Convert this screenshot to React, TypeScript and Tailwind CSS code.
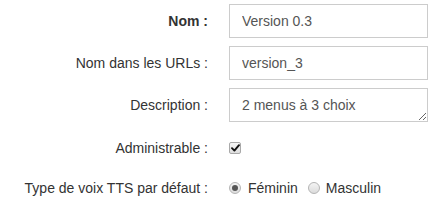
import React from "react"

const font = { fontFamily: '"Liberation Sans", Arial, sans-serif' }

function Row({ label, bold, children }: { label: string; bold?: boolean; children: React.ReactNode }) {
  return (
    <div className="flex h-[20px] items-center">
      <div className={`w-[208px] shrink-0 text-right text-[14px] leading-[20px] text-[#333] ${bold ? "font-bold" : ""}`}>
        {label}
      </div>
      <div className="ml-[21px] flex w-[199px] items-center">{children}</div>
    </div>
  )
}

function FieldRow({ label, bold, children }: { label: string; bold?: boolean; children: React.ReactNode }) {
  return (
    <div className="flex h-[34px] items-center">
      <div className={`w-[208px] shrink-0 text-right text-[14px] leading-[20px] text-[#333] ${bold ? "font-bold" : ""}`}>
        {label}
      </div>
      <div className="ml-[21px] w-[199px]">{children}</div>
    </div>
  )
}

function Radio({ checked }: { checked?: boolean }) {
  return (
    <span className="inline-flex h-[12px] w-[12px] items-center justify-center rounded-full border border-[#b4b4b4] bg-gradient-to-b from-[#f4f4f4] to-[#dcdcdc]">
      {checked && <span className="h-[6px] w-[6px] rounded-full bg-[#555]" />}
    </span>
  )
}

export default function App() {
  return (
    <div className="h-[207px] w-[432px] bg-white" style={font}>
      <div className="flex flex-col pt-[4px]">
        <FieldRow label="Nom :" bold>
          <input
            readOnly
            value="Version 0.3"
            className="block h-[34px] w-full border border-[#ccc] bg-white px-[12px] text-[14px] text-[#555] outline-none"
          />
        </FieldRow>
        <div className="h-[8px]" />
        <FieldRow label="Nom dans les URLs :">
          <input
            readOnly
            value="version_3"
            className="block h-[34px] w-full border border-[#ccc] bg-white px-[12px] text-[14px] text-[#555] outline-none"
          />
        </FieldRow>
        <div className="h-[8px]" />
        <FieldRow label="Description :">
          <textarea
            readOnly
            value="2 menus à 3 choix"
            rows={1}
            className="block h-[34px] w-full border border-[#ccc] bg-white px-[12px] py-[6px] text-[14px] leading-[20px] text-[#555] outline-none"
          />
        </FieldRow>
        <div className="h-[16px]" />
        <Row label="Administrable :">
          <span className="flex h-[12px] w-[12px] items-center justify-center rounded-[2px] border border-[#a9a9a9] bg-gradient-to-b from-[#f6f6f6] to-[#dedede]">
            <svg width="9" height="8" viewBox="0 0 9 8">
              <path d="M1 4.2 L3.4 6.6 L8 1.2" fill="none" stroke="#111" strokeWidth="1.9" strokeLinecap="round" strokeLinejoin="round" />
            </svg>
          </span>
        </Row>
        <div className="h-[20px]" />
        <Row label="Type de voix TTS par défaut :">
          <div className="flex items-center text-[14px] text-[#333]">
            <Radio checked />
            <span className="ml-[7px]">Féminin</span>
            <span className="ml-[10px] flex"><Radio /></span>
            <span className="ml-[6px]">Masculin</span>
          </div>
        </Row>
      </div>
    </div>
  )
}
